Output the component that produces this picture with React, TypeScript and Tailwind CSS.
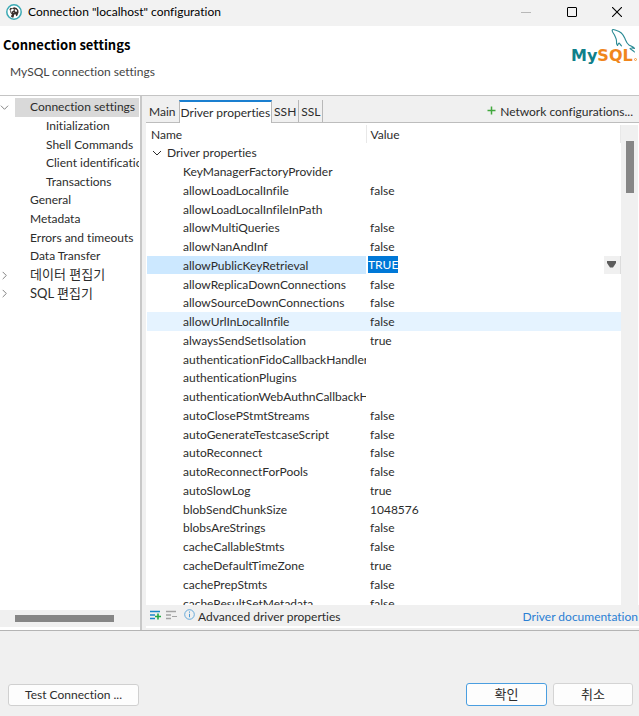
import React from "react";

const tree = [
  { label: "Connection settings", level: 0, mark: "open", selected: true },
  { label: "Initialization", level: 1 },
  { label: "Shell Commands", level: 1 },
  { label: "Client identification", level: 1 },
  { label: "Transactions", level: 1 },
  { label: "General", level: 0 },
  { label: "Metadata", level: 0 },
  { label: "Errors and timeouts", level: 0 },
  { label: "Data Transfer", level: 0 },
  { label: "데이터 편집기", level: 0, mark: "closed" },
  { label: "SQL 편집기", level: 0, mark: "closed" },
];

const properties: [string, string][] = [
  ["KeyManagerFactoryProvider", ""],
  ["allowLoadLocalInfile", "false"],
  ["allowLoadLocalInfileInPath", ""],
  ["allowMultiQueries", "false"],
  ["allowNanAndInf", "false"],
  ["allowPublicKeyRetrieval", "TRUE"],
  ["allowReplicaDownConnections", "false"],
  ["allowSourceDownConnections", "false"],
  ["allowUrlInLocalInfile", "false"],
  ["alwaysSendSetIsolation", "true"],
  ["authenticationFidoCallbackHandler", ""],
  ["authenticationPlugins", ""],
  ["authenticationWebAuthnCallbackHandler", ""],
  ["autoClosePStmtStreams", "false"],
  ["autoGenerateTestcaseScript", "false"],
  ["autoReconnect", "false"],
  ["autoReconnectForPools", "false"],
  ["autoSlowLog", "true"],
  ["blobSendChunkSize", "1048576"],
  ["blobsAreStrings", "false"],
  ["cacheCallableStmts", "false"],
  ["cacheDefaultTimeZone", "true"],
  ["cachePrepStmts", "false"],
  ["cacheResultSetMetadata", "false"],
];

const editing = "allowPublicKeyRetrieval";
const hovered = "allowUrlInLocalInfile";

function Chevron({ open, className }: { open: boolean; className: string }) {
  return (
    <svg viewBox="0 0 10 10" className={className} fill="none" stroke="currentColor" aria-hidden="true">
      <path d={open ? "M1 3l4 4 4-4" : "M3 1l4 4-4 4"} />
    </svg>
  );
}

function AppIcon() {
  return (
    <svg viewBox="0 0 16 16" className="size-4" aria-hidden="true">
      <circle cx="8" cy="8" r="7.2" fill="#fff" stroke="#3aa9b4" strokeWidth="1.5" />
      <path d="M3.500 5.200l1-1.400 1.300.5 2.400-1 2.400.8 1.700 2 .3 2.200-1.200 3.200-1.300.8-.4-2-1.500.2-.7 3H6l-1.200-1.300 1.200-1.700L4.600 9z" fill="#3a302c" />
      <path d="M4.500 6l2-1.400 1.500.8-.8 1.700-1.700.5.500 1.200-1-.6zM8.800 5l2 .9.300 1.600-1.400.4-1-1.400zM7.200 8l1.300.2-.8.9z" fill="#fff" />
    </svg>
  );
}

function MySqlLogo() {
  return (
    <svg viewBox="0 0 68 37" className="h-[37px] w-[68px]" role="img" aria-label="MySQL">
      <g fill="none" stroke="#2a8a94" strokeWidth="1.1" strokeLinejoin="round" strokeLinecap="round">
        <path d="M46.500 17.500c-1-1-1.200-2.500-1-4.500.1-2-.9-3.200-1.800-5.500C42.700 5.200 40 3 41.500 1.800c1-.8 2.500.4 4 .7 3.500.8 6.500 3.500 8.200 7.500 1.300 3 2 5.500 4.300 7 2 1.200 4.500 2 5.500 3.400-1.800-.5-4-.2-4.500.3 1.200 1 3.200 1.800 4.500 3.300" />
        <path d="M46.500 17.500c.5-1.200 1-2 1.700-2.500.8 1 1.200 1.800 2.300 2.800" />
      </g>
      <text x="0" y="33" fontSize="16" fontWeight="700" fontFamily="DejaVu Sans, sans-serif" fill="#10808a">
        My<tspan fill="#f0861c">SQL</tspan>
      </text>
      <circle cx="64.500" cy="31.500" r="1" fill="none" stroke="#f0861c" strokeWidth=".8" />
    </svg>
  );
}

function TitleBar() {
  const control = "flex h-6 w-[46px] items-center justify-center";
  return (
    <div className="flex h-[26px] shrink-0 items-start bg-[#f2f2f2]">
      <div className="flex h-6 flex-1 items-center gap-[6px] pl-[6px]">
        <AppIcon />
        <h1 className="text-[12px] text-black">Connection "localhost" configuration</h1>
      </div>
      <div className="flex">
        <button aria-label="Minimize" className={control}>
          <span className="h-px w-[10px] bg-[#b8b8b8]" />
        </button>
        <button aria-label="Maximize" className={control}>
          <span className="size-[10px] rounded-[1px] border border-black" />
        </button>
        <button aria-label="Close" className="flex h-6 w-[44px] items-center justify-center">
          <svg viewBox="0 0 10 10" className="size-[10px]" stroke="#000" strokeWidth="1.100" aria-hidden="true">
            <path d="M0 0l10 10M10 0L0 10" />
          </svg>
        </button>
      </div>
    </div>
  );
}

function Sidebar() {
  return (
    <nav aria-label="Settings" className="flex w-[142px] shrink-0 flex-col border-r-2 border-[#c8c8c8] bg-white pt-[2px]">
      <ul className="grid h-[205px] auto-rows-fr overflow-hidden text-[12px]">
        {tree.map((item) => (
          <li key={item.label} className="flex items-center overflow-hidden">
            <span className="flex w-[15px] shrink-0 text-[#777]">
              {item.mark && <Chevron open={item.mark === "open"} className="size-[9px]" />}
            </span>
            <a
              href="#"
              className={`mr-[1px] flex h-full flex-1 items-center overflow-hidden whitespace-nowrap ${
                item.level ? "pl-[31px]" : "pl-[15px]"
              } ${item.selected ? "bg-[#d9d9d9]" : ""} ${item.mark === "closed" ? "text-[13px]" : ""}`}
            >
              {item.label}
            </a>
          </li>
        ))}
      </ul>
      <div className="mt-auto mb-[3px] flex h-[17px] items-center bg-[#f0f0f0] pl-[15px]">
        <div className="h-[7px] w-[99px] bg-[#868686]" />
      </div>
    </nav>
  );
}

function Tabs() {
  const plain = "h-[22px] border-r border-[#b8b8b8] px-[2px] pt-[2px]";
  return (
    <div className="flex h-[27px] shrink-0 items-end border-b border-[#bdbdbd] text-[12px]">
      <div role="tablist" className="flex items-end">
        <button role="tab" aria-selected="false" className="h-[22px] px-[3px] pt-[2px]">Main</button>
        <button role="tab" aria-selected="true" className="-mb-px h-[23px] border-x border-t-2 border-x-[#b8b8b8] border-t-[#1a7fd0] bg-white px-px">
          Driver properties
        </button>
        <button role="tab" aria-selected="false" className={plain}>SSH</button>
        <button role="tab" aria-selected="false" className={plain}>SSL</button>
      </div>
      <button className="ml-auto flex h-[22px] items-center gap-1 pt-[2px] pr-[6px]">
        <svg viewBox="0 0 9 9" className="mb-1 size-[9px]" stroke="#42a83e" strokeWidth="1.500" aria-hidden="true">
          <path d="M4.500 0.500v8M.5 4.500h8" />
        </svg>
        Network configurations...
      </button>
    </div>
  );
}

function PropertyTable() {
  return (
    <div className="flex min-h-0 flex-1 bg-white pt-[2px]">
      <div className="min-w-0 flex-1 overflow-hidden pl-px">
        <table className="h-[487px] w-full table-fixed border-collapse text-left text-[12px] leading-[16px] whitespace-nowrap">
          <thead>
            <tr className="h-[18px]">
              <th className="w-[219px] border-r border-[#e8e8e8] p-0 pt-[2px] pl-1 font-normal">Name</th>
              <th className="border-r border-[#e8e8e8] p-0 pt-[2px] pl-1 font-normal">Value</th>
            </tr>
          </thead>
          <tbody>
            <tr className="h-[18px]">
              <td colSpan={2} className="p-0 pt-[2px]">
                <div className="flex items-center gap-[5px] pl-[5px]">
                  <Chevron open className="size-[10px]" />
                  Driver properties
                </div>
              </td>
            </tr>
            {properties.map(([name, value]) => {
              const active = name === editing;
              const tint = active ? "bg-[#cce8ff]" : name === hovered ? "bg-[#e5f3ff]" : "";
              return (
                <tr key={name} className="h-[18px]">
                  <td className={`overflow-hidden p-0 pt-[2px] pl-9 ${tint}`}>{name}</td>
                  {active ? (
                    <td className="p-0 pl-[2px]">
                      <div className="flex h-[18px] items-center justify-between">
                        <input
                          aria-label={name}
                          defaultValue={value}
                          className="h-[17px] w-[30px] bg-[#0078d7] p-0 text-white outline-none"
                        />
                        <button aria-label="Show values" className="flex h-[18px] w-[17px] items-center justify-center border-r border-[#dcdcdc] bg-[#f0f0f0]">
                          <svg viewBox="0 0 9 7" className="h-[7px] w-[9px]" fill="#5c5c5c" aria-hidden="true">
                            <path d="M0 0h9v2L6 6.500H3L0 2z" />
                          </svg>
                        </button>
                      </div>
                    </td>
                  ) : (
                    <td className={`p-0 pt-[2px] pl-1 ${tint}`}>{value}</td>
                  )}
                </tr>
              );
            })}
          </tbody>
        </table>
      </div>
      <div className="mr-px flex w-[17px] shrink-0 justify-center bg-[#f0f0f0] pt-[16px]">
        <div className="h-[52px] w-[8px] bg-[#868686]" />
      </div>
    </div>
  );
}

function ListIcon({ add }: { add: boolean }) {
  return (
    <svg viewBox="0 0 11 10" className="h-[10px] w-[11px]" fill="none" aria-hidden="true">
      <path d="M0 1.500h10M0 5h5M0 8.500h5" stroke={add ? "#1b86c8" : "#a3a3a3"} strokeWidth="1.400" />
      <path d={add ? "M5 6.500h6M8 3.500v6" : "M6 6.500h5"} stroke={add ? "#22a845" : "#a3a3a3"} strokeWidth={add ? 1.6 : 1} />
    </svg>
  );
}

function PropertyBar() {
  return (
    <div className="mb-[2px] flex h-[23px] shrink-0 items-center border-b-2 border-white pl-px text-[12px]">
      <button aria-label="Add property" className="mr-[5px] mb-[2px] ml-[3px]"><ListIcon add /></button>
      <button aria-label="Remove property" className="mr-[7px] mb-[2px]"><ListIcon add={false} /></button>
      <svg viewBox="0 0 11 11" className="mr-[3px] mb-[3px] size-[11px]" fill="none" stroke="#4a9ad4" aria-hidden="true">
        <circle cx="5.500" cy="5.500" r="4.800" strokeWidth=".8" />
        <path d="M5.500 4.800v3.400M5.500 2.500v1.200" />
      </svg>
      <span className="pt-[2px]">Advanced driver properties</span>
      <a href="#" className="ml-auto pt-[2px] pr-px text-[#2a7fd4]">Driver documentation</a>
    </div>
  );
}

export default function App() {
  return (
    <div className="flex h-screen flex-col overflow-hidden bg-[#f0f0f0] font-['Lato','Noto_Sans_CJK_KR',sans-serif] text-[#2c2c2c] [font-variant-ligatures:none]">
      <TitleBar />
      <header className="flex h-[70px] shrink-0 justify-between border-b border-[#c4c4c4] bg-white">
        <div className="pt-[10px] pl-[3px]">
          <h2 className="font-['Noto_Sans_CJK_KR',sans-serif] text-[13px] leading-[18px] font-bold text-black">Connection settings</h2>
          <p className="mt-[9px] pl-[7px] text-[12px] leading-[18px] text-[#444]">MySQL connection settings</p>
        </div>
        <div className="pt-[2px]"><MySqlLogo /></div>
      </header>
      <main className="flex min-h-0 flex-1">
        <Sidebar />
        <section className="flex min-w-0 flex-1 flex-col pl-1">
          <Tabs />
          <PropertyTable />
          <PropertyBar />
        </section>
      </main>
      <footer className="flex h-[86px] shrink-0 items-end border-t border-[#b4b4b4] px-[6px] pb-[10px] text-[12px]">
        <button className="ml-[2px] h-[22px] w-[131px] rounded-[3px] border border-[#d0d0d0] bg-[#fdfdfd]">Test Connection ...</button>
        <button className="mr-[6px] ml-auto h-[23px] w-[81px] rounded-[3px] border border-[#4a9ee0] bg-[#fdfdfd] text-[13px]">확인</button>
        <button className="h-[23px] w-[80px] rounded-[3px] border border-[#d4d4d4] bg-[#fdfdfd] text-[13px]">취소</button>
      </footer>
    </div>
  );
}
